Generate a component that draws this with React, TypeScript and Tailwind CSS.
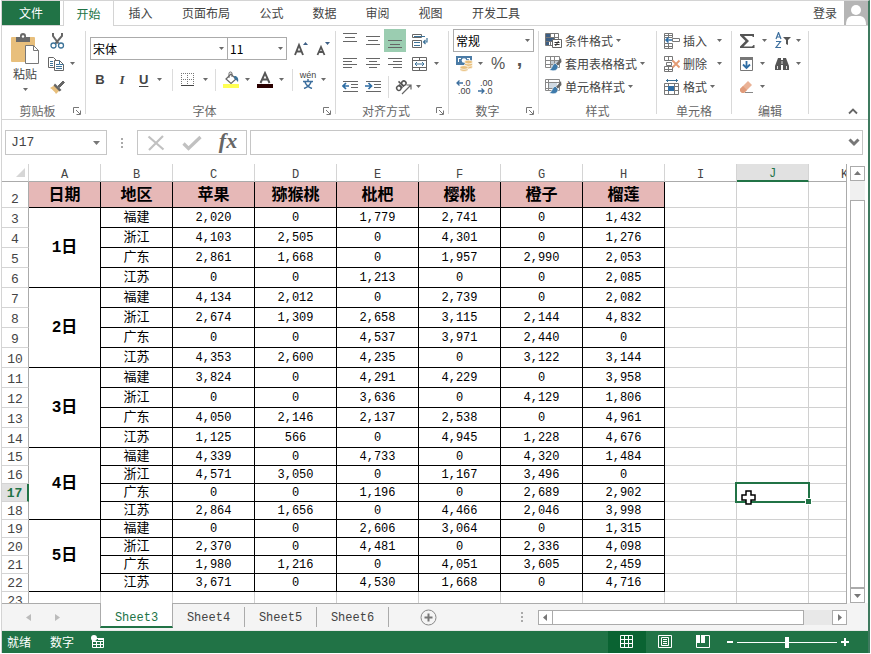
import { useState } from "react";
import type { ReactNode } from "react";

const regions = ["福建", "浙江", "广东", "江苏"];
const headers = ["日期", "地区", "苹果", "猕猴桃", "枇杷", "樱桃", "橙子", "榴莲"];
const columns = ["A", "B", "C", "D", "E", "F", "G", "H", "I", "J", "K"];
const ribbonTabs = [
  { name: "插入", width: "w-[53px]" },
  { name: "页面布局", width: "w-[78px]" },
  { name: "公式", width: "w-[53px]" },
  { name: "数据", width: "w-[53px]" },
  { name: "审阅", width: "w-[53px]" },
  { name: "视图", width: "w-[53px]" },
  { name: "开发工具", width: "w-[78px]" },
];
const sheets = ["Sheet3", "Sheet4", "Sheet5", "Sheet6"];

const days = [
  {
    day: "1日",
    rows: [
      ["2,020", "0", "1,779", "2,741", "0", "1,432"],
      ["4,103", "2,505", "0", "4,301", "0", "1,276"],
      ["2,861", "1,668", "0", "1,957", "2,990", "2,053"],
      ["0", "0", "1,213", "0", "0", "2,085"],
    ],
  },
  {
    day: "2日",
    rows: [
      ["4,134", "2,012", "0", "2,739", "0", "2,082"],
      ["2,674", "1,309", "2,658", "3,115", "2,144", "4,832"],
      ["0", "0", "4,537", "3,971", "2,440", "0"],
      ["4,353", "2,600", "4,235", "0", "3,122", "3,144"],
    ],
  },
  {
    day: "3日",
    rows: [
      ["3,824", "0", "4,291", "4,229", "0", "3,958"],
      ["0", "0", "3,636", "0", "4,129", "1,806"],
      ["4,050", "2,146", "2,137", "2,538", "0", "4,961"],
      ["1,125", "566", "0", "4,945", "1,228", "4,676"],
    ],
  },
  {
    day: "4日",
    rows: [
      ["4,339", "0", "4,733", "0", "4,320", "1,484"],
      ["4,571", "3,050", "0", "1,167", "3,496", "0"],
      ["0", "0", "1,196", "0", "2,689", "2,902"],
      ["2,864", "1,656", "0", "4,466", "2,046", "3,998"],
    ],
  },
  {
    day: "5日",
    rows: [
      ["0", "0", "2,606", "3,064", "0", "1,315"],
      ["2,370", "0", "4,481", "0", "2,336", "4,098"],
      ["1,980", "1,216", "0", "4,051", "3,605", "2,459"],
      ["3,671", "0", "4,530", "1,668", "0", "4,716"],
    ],
  },
];

function Icon({ w = 16, h = 16, children }: { w?: number; h?: number; children: ReactNode }) {
  return (
    <svg width={w} height={h} viewBox={`0 0 ${w} ${h}`} fill="none" className="shrink-0" aria-hidden="true">
      {children}
    </svg>
  );
}

function Caret() {
  return (
    <Icon w={5} h={3}>
      <path d="M0 0h5L2.5 3z" fill="#6a6a6a" />
    </Icon>
  );
}

function Tool({ label, className = "", children }: { label: string; className?: string; children: ReactNode }) {
  return (
    <button type="button" aria-label={label} className={`flex h-[23px] shrink-0 items-center ${className}`}>
      {children}
    </button>
  );
}

function Divider() {
  return <div className="h-[22px] w-px shrink-0 bg-[#dcdcdc]" />;
}

function Group({ title, launcher, className, children }: { title: string; launcher?: boolean; className: string; children: ReactNode }) {
  return (
    <section aria-label={title} className={`flex shrink-0 flex-col ${className}`}>
      <div className="flex flex-1">
        <div className="flex min-w-0 flex-1 flex-col">
          <div className="h-[73px]">{children}</div>
          <div className="flex h-5 items-center">
            <span className="flex-1 pt-[3px] text-center leading-4 text-[#666]">{title}</span>
            {launcher && (
              <button type="button" aria-label={`${title}设置`} className="flex w-3 pt-1">
                <Icon w={8} h={8}>
                  <path d="M.5 6V.5H6M3 3l4 4M7.5 3.5v4h-4" stroke="#777" />
                </Icon>
              </button>
            )}
          </div>
        </div>
        <div className="my-[5px] w-px bg-[#d9d9d9]" />
      </div>
    </section>
  );
}

function Dropdown({ label, value, className }: { label: string; value: string; className: string }) {
  return (
    <div className={`relative ${className}`}>
      <select aria-label={label} className="h-[23px] w-full appearance-none border border-[#ababab] bg-white pl-[2px] text-black outline-none">
        <option>{value}</option>
      </select>
      <span className="pointer-events-none absolute top-[10px] right-[4px]">
        <Caret />
      </span>
    </div>
  );
}

function Lines({ d }: { d: string }) {
  return (
    <Icon w={16} h={15}>
      <path d={d} stroke="#666" />
    </Icon>
  );
}

function ClipboardGroup() {
  return (
    <Group title="剪贴板" launcher className="w-[84px]">
      <div className="flex pt-[3px]">
        <button type="button" className="ml-[7px] flex w-[32px] flex-col items-center pt-[4px] text-[#444]">
          <Icon w={30} h={31}>
            <rect x="1" y="4" width="24" height="25" rx="1" fill="#e8bf7c" />
            <path d="M6 4h4V3a3 3 0 0 1 6 0v1h4v5H6z" fill="#6a6a6a" />
            <circle cx="13" cy="3.5" r="1.2" fill="#fff" />
            <path d="M15.5 12.5h8l5 5v13h-13z" fill="#fff" stroke="#777" />
            <path d="M23.5 12.5v5h5" stroke="#777" />
          </Icon>
          <span className="mt-[2px] leading-4">粘贴</span>
          <span className="mt-[6px]">
            <Caret />
          </span>
        </button>
        <div className="ml-[7px] flex flex-col items-start">
          <Tool label="剪切" className="w-[18px] justify-center">
            <Icon>
              <path d="M4 0v3l5.500 7.500M13 0v3l-6.500 7.500" stroke="#666" strokeWidth="2" />
              <circle cx="4.500" cy="12.500" r="2.500" stroke="#3d7399" strokeWidth="1.300" />
              <circle cx="12" cy="12.500" r="2.500" stroke="#3d7399" strokeWidth="1.300" />
            </Icon>
          </Tool>
          <Tool label="复制" className="w-[28px] gap-[6px]">
            <Icon>
              <path d="M.5 1.5h5l3 3v7h-8z" fill="#fff" stroke="#666" />
              <path d="M2 5.500h3M2 7.500h3M2 9.500h3" stroke="#3d7399" />
              <path d="M6.500 4.500h5l4 4v6h-9z" fill="#fff" stroke="#666" />
              <path d="M8 8.500h3M8 10.500h6M8 12.500h6M11.500 4.500v4h4" stroke="#3d7399" />
            </Icon>
            <Caret />
          </Tool>
          <Tool label="格式刷" className="w-[18px] justify-center">
            <Icon>
              <path d="M1 9l5-3 5 5-4 4c-1-2-4-5-6-6z" fill="#e8bf7c" />
              <path d="M6 4.500l6.500 6.500-2 1.500L4.500 6.500z" fill="#666" />
              <path d="M9 7l5-5 1.500 1.500-5 5z" fill="#666" stroke="#666" />
            </Icon>
          </Tool>
        </div>
      </div>
    </Group>
  );
}

function FontGroup() {
  return (
    <Group title="字体" launcher className="w-[250px]">
      <div className="flex items-center pt-[11px] pl-1">
        <Dropdown label="字体名称" value="宋体" className="w-[138px]" />
        <Dropdown label="字号" value="11" className="-ml-px w-[60px]" />
        <Tool label="增大字号" className="ml-[5px] w-[18px] justify-center">
          <Icon w={15}>
            <path d="M1 14L5 4 9 14M2.500 10.500h5" stroke="#555" strokeWidth="1.900" />
            <path d="M9 4h5L11.500 1z" fill="#3d5f85" />
          </Icon>
        </Tool>
        <Tool label="减小字号" className="ml-[4px] w-[18px] justify-center">
          <Icon w={15}>
            <path d="M1.500 14L5 6 8.500 14M3 11h4" stroke="#555" strokeWidth="1.800" />
            <path d="M9 1h5L11.500 4z" fill="#3d5f85" />
          </Icon>
        </Tool>
      </div>
      <div className="flex items-center pt-[8px] pl-[3px] font-['Liberation_Sans',sans-serif] text-[13px] text-[#444]">
        <Tool label="加粗" className="w-[22px] justify-center">
          <b>B</b>
        </Tool>
        <Tool label="倾斜" className="w-[22px] justify-center">
          <i className="font-['Liberation_Serif',serif] font-bold">I</i>
        </Tool>
        <Tool label="下划线" className="w-[36px] gap-[9px] pl-[6px]">
          <b className="underline underline-offset-2">U</b>
          <Caret />
        </Tool>
        <div className="ml-[3px] flex items-center">
          <Divider />
          <Tool label="边框" className="w-[42px] gap-[8px] pl-[8px]">
            <Icon w={14} h={14}>
              <path d="M.5 0v13M6.500 0v13M12.500 0v13M0 .5h13M0 6.500h13" stroke="#777" strokeDasharray="1 1" />
              <path d="M0 12.500h13" stroke="#444" />
            </Icon>
            <Caret />
          </Tool>
          <Divider />
        </div>
        <Tool label="填充颜色" className="w-[39px] gap-[5px] pl-[7px]">
          <Icon w={17} h={17}>
            <path d="M3 8l5-5 5 5-5 4.500z" fill="#fff" stroke="#666" strokeWidth="1.200" />
            <path d="M6 7V2.500a1.500 1.500 0 0 1 3 0V6" stroke="#666" />
            <path d="M11 5c3-.5 5 2 4 6-1-1-2-2.500-3.500-3z" fill="#3d7399" />
            <path d="M0 13h16v4H0z" fill="#ffff52" />
          </Icon>
          <Caret />
        </Tool>
        <Tool label="字体颜色" className="w-[33px] gap-[6px] pl-[2px]">
          <Icon w={16} h={17}>
            <path d="M3.500 12L8 2l4.500 10M5 8.500h6" stroke="#555" strokeWidth="1.900" />
            <path d="M0 13h16v4H0z" fill="#2a0000" />
          </Icon>
          <Caret />
        </Tool>
        <div className="ml-[4px] flex items-center">
          <Divider />
          <Tool label="拼音指南" className="w-[40px] justify-center gap-[5px]">
            <span className="flex flex-col items-center text-[9px] leading-[10px]">
              <span className="h-[9px]">wén</span>
              <Icon w={10} h={10}>
                <path d="M5 0v2M0 2.500h10M2 3c1 3 3 5 7 6.500M8 3C7 6 5 8 1 9.500" stroke="#3d6f9e" strokeWidth="1.500" />
              </Icon>
            </span>
            <Caret />
          </Tool>
        </div>
      </div>
    </Group>
  );
}

function AlignmentGroup() {
  return (
    <Group title="对齐方式" launcher className="w-[113px]">
      <div className="flex flex-col pt-[3px] pl-[3px]">
        <div className="flex">
          <Tool label="顶端对齐" className="w-[22px] justify-center">
            <Lines d="M1 .5h14M3 4.500h10M1 8.500h14" />
          </Tool>
          <Tool label="垂直居中" className="w-[23px] justify-center">
            <Lines d="M1 3.500h14M3 7.500h10M1 11.500h14" />
          </Tool>
          <Tool label="底端对齐" className="w-[22px] justify-center bg-[#9bcdb1]">
            <Lines d="M1 7.500h14M3 11.500h10M1 14.500h14" />
          </Tool>
          <Tool label="自动换行" className="ml-[4px] w-[20px] justify-center">
            <Icon>
              <path d="M.5 1.500h9v3h-9zM.5 7.500h9v7h-9z" stroke="#666" />
              <path d="M2 3.500h11M2 9.500h6M2 12.500h6" stroke="#3d7399" />
              <path d="M15 5v4h-3M13.500 7l-2 2 2 2" stroke="#3d7399" strokeWidth="1.200" />
            </Icon>
          </Tool>
        </div>
        <div className="flex">
          <Tool label="左对齐" className="w-[22px] justify-center">
            <Lines d="M1 2.500h14M1 5.500h9M1 8.500h14M1 11.500h9" />
          </Tool>
          <Tool label="居中" className="w-[23px] justify-center">
            <Lines d="M1 2.500h14M4 5.500h8M1 8.500h14M4 11.500h8" />
          </Tool>
          <Tool label="右对齐" className="w-[22px] justify-center">
            <Lines d="M1 2.500h14M6 5.500h9M1 8.500h14M6 11.500h9" />
          </Tool>
          <Tool label="合并后居中" className="ml-[6px] w-[30px] gap-[6px]">
            <Icon>
              <path d="M.5 1.500h14v13H.5zM.5 4.500h14M.5 11.500h14M7.500 1.500v3M7.500 11.500v3" stroke="#666" />
              <path d="M3 8h9M5 6L3 8l2 2M10 6l2 2-2 2" stroke="#3d7399" />
            </Icon>
            <Caret />
          </Tool>
        </div>
        <div className="flex items-center">
          <Tool label="减少缩进量" className="w-[22px] justify-center">
            <Icon>
              <path d="M1 2.500h15M9 5.500h7M9 8.500h7M1 12.500h15" stroke="#666" />
              <path d="M1 7h6M4 4L1 7l3 3" stroke="#2f6ea5" strokeWidth="1.700" />
            </Icon>
          </Tool>
          <Tool label="增加缩进量" className="w-[23px] justify-center">
            <Icon>
              <path d="M1 2.500h15M9 5.500h7M9 8.500h7M1 12.500h15" stroke="#666" />
              <path d="M0 7h6M3.500 4l3 3-3 3" stroke="#2f6ea5" strokeWidth="1.700" />
            </Icon>
          </Tool>
          <div className="ml-[4px] flex items-center">
            <Divider />
            <Tool label="方向" className="w-[38px] gap-[3px] pl-[6px]">
              <Icon w={18} h={18}>
                <g stroke="#555" strokeWidth="1.500" transform="rotate(-45 6 8)">
                  <circle cx="3" cy="8" r="2.200" />
                  <path d="M5.500 5.500v5" />
                  <circle cx="10" cy="8" r="2.200" />
                  <path d="M7.500 3v7.500" />
                </g>
                <path d="M7 16l8.500-8.500M11.500 7h4.500v4.500" stroke="#666" strokeWidth="1.200" />
              </Icon>
              <Caret />
            </Tool>
          </div>
        </div>
      </div>
    </Group>
  );
}

function DecimalDigits({ digits, className = "" }: { digits: string; className?: string }) {
  return <span className={`block h-2 font-['Liberation_Sans',sans-serif] text-[9px] leading-2 ${className}`}>{digits}</span>;
}

function NumberGroup() {
  return (
    <Group title="数字" launcher className="w-[90px]">
      <div className="flex flex-col pt-[3px] pl-[4px]">
        <Dropdown label="数字格式" value="常规" className="w-[81px]" />
        <div className="flex font-['Liberation_Sans',sans-serif] text-base text-[#555]">
          <Tool label="会计数字格式" className="w-[34px] gap-[5px] pl-[3px]">
            <Icon w={17} h={17}>
              <path d="M0 1h16v9H0z" fill="#4a7ba6" />
              <path d="M2 3h3v1H3v3H2zM11 3h3v4h-1V4h-2z" fill="#fff" />
              <circle cx="8" cy="5.500" r="2.300" fill="#fff" />
              <g fill="#e8bf7c" stroke="#fff" strokeWidth=".7">
                <ellipse cx="12.500" cy="12" rx="4" ry="1.900" />
                <ellipse cx="12.500" cy="9.500" rx="4" ry="1.900" />
                <ellipse cx="12.500" cy="7" rx="4" ry="1.900" />
                <ellipse cx="8" cy="14.500" rx="4" ry="1.900" />
                <ellipse cx="8" cy="12.500" rx="4" ry="1.900" />
              </g>
            </Icon>
            <Caret />
          </Tool>
          <Tool label="百分比样式" className="w-[22px] justify-center">
            %
          </Tool>
          <Tool label="千位分隔样式" className="w-[21px] justify-center pb-[9px] text-xl font-bold">
            ,
          </Tool>
        </div>
        <div className="flex text-[#444]">
          <Tool label="增加小数位数" className="ml-[3px] w-[22px]">
            <span className="flex flex-col items-end">
              <span className="flex">
                <Icon w={7} h={8}>
                  <path d="M1 4h6M3.500 1.500L1 4l2.500 2.500" stroke="#3d6f9e" strokeWidth="1.300" />
                </Icon>
                <DecimalDigits digits=".0" />
              </span>
              <DecimalDigits digits=".00" />
            </span>
          </Tool>
          <Tool label="减少小数位数" className="w-[20px]">
            <span className="flex flex-col items-end">
              <DecimalDigits digits=".00" />
              <span className="flex">
                <Icon w={7} h={8}>
                  <path d="M0 4h6M3.500 1.500L6 4 3.500 6.500" stroke="#3d6f9e" strokeWidth="1.300" />
                </Icon>
                <DecimalDigits digits=".0" />
              </span>
            </span>
          </Tool>
        </div>
      </div>
    </Group>
  );
}

function StyleBrush() {
  return (
    <>
      <path d="M16 3L11 9l1.500 2L16.500 7z" fill="#666" />
      <path d="M10.500 8.500c-3 0-3 4.500-6 6.500 4 1.500 8.500 1 8.500-4z" fill="#3d7aab" stroke="#fff" strokeWidth=".6" />
    </>
  );
}

function StylesGroup() {
  return (
    <Group title="样式" className="w-[118px]">
      <div className="flex flex-col items-start pt-[3px] pl-[6px] text-[#444]">
        <button type="button" className="flex h-[23px] items-center gap-[3px]">
          <Icon w={17} h={17}>
            <path d="M.5 1.500h13v12H.5zM.5 5.500h13M.5 9.500h13M5.500 1.500v12M9.500 1.500v12" stroke="#777" />
            <path d="M1 2h4v3H1zM1 6h8v3H1zM1 10h3v3H1z" fill="#3d5f85" />
            <path d="M7.500 7.500h9v8h-9z" fill="#fff" stroke="#666" />
            <path d="M9.500 10.500h5M9.500 12.500h5M13.500 9l-3 5" stroke="#333" />
          </Icon>
          条件格式
          <Caret />
        </button>
        <button type="button" className="flex h-[23px] items-center gap-[3px]">
          <Icon w={17} h={17}>
            <path d="M.5 1.500h14v11H.5zM.5 5.500h14M.5 9.500h14M5.500 1.500v11M9.500 1.500v11" fill="#fff" stroke="#888" />
            <path d="M6 6h3v3H6zM10 6h3v3h-3zM6 10h3v2H6z" fill="#c3ccd4" />
            <StyleBrush />
          </Icon>
          套用表格格式
          <Caret />
        </button>
        <button type="button" className="flex h-[23px] items-center gap-[3px]">
          <Icon w={17} h={17}>
            <path d="M.5 1.500h14v11H.5zM.5 4.500h14M3.500 1.500v11M.5 10.500h10" fill="#fff" stroke="#888" />
            <path d="M4 5h8v5H4z" fill="#d0dae3" />
            <StyleBrush />
          </Icon>
          单元格样式
          <Caret />
        </button>
      </div>
    </Group>
  );
}

function CellsGroup() {
  return (
    <Group title="单元格" className="w-[75px]">
      <div className="flex flex-col items-start pt-[3px] pl-[7px] text-[#444]">
        <button type="button" className="flex h-[23px] items-center">
          <Icon w={17}>
            <path d="M.5.5h8v4h-8zM.5 10.500h8v5h-8zM4.500.5v4M4.500 10.500v5M.5 2.500h8M.5 13.500h8M.5 4.500v6" stroke="#777" />
            <path d="M8.500 5.500h7v3h-7z" stroke="#777" />
            <path d="M2 7h6M4.500 4.500L2 7l2.500 2.500" stroke="#2f6ea5" strokeWidth="1.600" />
          </Icon>
          <span className="mr-[10px] ml-[2px]">插入</span>
          <Caret />
        </button>
        <button type="button" className="flex h-[23px] items-center">
          <Icon w={17}>
            <path d="M.5.5h8v4h-8zM.5 10.500h8v5h-8zM4.500.5v4M4.500 10.500v5M.5 13.500h8M2.500 6.500h5v3h-5z" stroke="#777" />
            <path d="M8.500 4.500l7 7M15.500 4.500l-7 7" stroke="#e39a72" strokeWidth="1.800" />
          </Icon>
          <span className="mr-[10px] ml-[2px]">删除</span>
          <Caret />
        </button>
        <button type="button" className="flex h-[23px] items-center">
          <Icon w={17}>
            <path d="M.5 4.500h14v11H.5zM.5 7.500h14M.5 11.500h14M4.500 4.500v11M10.500 4.500v11" stroke="#777" />
            <path d="M4 7h6v5H4z" fill="#2f6ea5" />
            <path d="M2 1.500h12M3.500 0v3M12.500 0v3" stroke="#3d7399" />
          </Icon>
          <span className="mr-[3px] ml-[2px]">格式</span>
          <Caret />
        </button>
      </div>
    </Group>
  );
}

function EditingGroup() {
  return (
    <Group title="编辑" className="w-[77px]">
      <div className="flex flex-col pt-[3px] pl-[7px]">
        <div className="flex">
          <Tool label="自动求和" className="w-[29px] gap-[6px]">
            <Icon w={17}>
              <path d="M1 1h14v3h-1l-1-1H5l5 5-5.500 5.500H13l1.500-1.500h1V15H1v-1.500L6.500 8 1 2.500z" fill="#555" />
            </Icon>
            <Caret />
          </Tool>
          <Tool label="排序和筛选" className="ml-[7px] w-[26px] gap-[4px]">
            <Icon w={17} h={17}>
              <path d="M1 7L3.500.5 6 7M2 5h3M1 9.500h4.500L1 15.500h5" stroke="#3d6f9e" strokeWidth="1.200" />
              <path d="M8 5h8l-3 3v5l-2-1V8z" fill="#555" />
            </Icon>
            <Caret />
          </Tool>
        </div>
        <div className="flex">
          <Tool label="填充" className="w-[27px] gap-[6px]">
            <Icon w={15}>
              <path d="M1.500 1.500h12v13h-12z" stroke="#777" />
              <path d="M1 1h13v3H1z" fill="#777" />
              <path d="M7.500 5v7M4 8.500l3.500 3.500L11 8.500" stroke="#2f6ea5" strokeWidth="1.800" />
            </Icon>
            <Caret />
          </Tool>
          <Tool label="查找和选择" className="ml-[8px] w-[28px] gap-[5px]">
            <Icon w={17}>
              <path d="M4 2h3v2h2V2h3l3 8v4H9V9H7v5H1v-4z" fill="#555" />
              <path d="M3.500 10v3M12.500 10v3M8 5v3" stroke="#ddd" />
            </Icon>
            <Caret />
          </Tool>
        </div>
        <div className="flex">
          <Tool label="清除" className="w-[27px] gap-[6px]">
            <Icon w={15}>
              <path d="M1 10l8-8 4 4-8 8H3l-2-2z" fill="#eab296" />
              <path d="M1 10l3-3 4 4-3 3H3l-2-2z" fill="#e09b7a" />
              <path d="M6 13.500h8" stroke="#888" />
            </Icon>
            <Caret />
          </Tool>
        </div>
      </div>
    </Group>
  );
}

function FormulaBar() {
  return (
    <div className="flex h-[44px] items-start pt-[10px] pr-[5px] pl-[3px]">
      <div className="flex h-[25px] w-[102px] items-center border border-[#c6c6c6] pr-[6px] pl-[5px]">
        <input
          aria-label="名称框"
          defaultValue="J17"
          className="min-w-0 flex-1 font-['Liberation_Mono',monospace] text-[13px] text-[#444] outline-none"
        />
        <button type="button" aria-label="展开名称框">
          <Icon w={7} h={4}>
            <path d="M0 0h7L3.500 4z" fill="#777" />
          </Icon>
        </button>
      </div>
      <div className="flex h-[25px] w-[30px] items-center justify-center">
        <Icon w={2} h={12}>
          <path d="M1 1v2M1 5v2M1 9v2" stroke="#aaa" strokeWidth="2" />
        </Icon>
      </div>
      <div className="flex h-[25px] w-[110px] items-center border border-[#c6c6c6]">
        <Tool label="取消" className="w-[36px] justify-center">
          <Icon w={18}>
            <path d="M1.500 1.500l15 13M16 1L2 15" stroke="#c1c1c1" strokeWidth="2.200" />
          </Icon>
        </Tool>
        <Tool label="输入" className="w-[36px] justify-center">
          <Icon w={20}>
            <path d="M1.500 8.500l5 5L18.500 2" stroke="#c1c1c1" strokeWidth="3.200" />
          </Icon>
        </Tool>
        <Tool label="插入函数" className="w-[36px] justify-center font-['Liberation_Serif',serif] text-[22px] leading-[22px] text-[#666]">
          <i className="pb-[3px] font-bold">fx</i>
        </Tool>
      </div>
      <div className="ml-[3px] flex h-[25px] min-w-0 flex-1 items-center border border-[#c6c6c6] pr-[2px]">
        <input aria-label="编辑栏" className="min-w-0 flex-1 px-1 outline-none" />
        <button type="button" aria-label="展开编辑栏">
          <Icon w={12} h={9}>
            <path d="M1.500 1.500L6 6l4.500-4.500" stroke="#777" strokeWidth="3" />
          </Icon>
        </button>
      </div>
    </div>
  );
}

function RowHeader({ row }: { row: number }) {
  const style =
    row === 17
      ? "border-r-2 border-r-[#217346] bg-[#e1e1e1] font-bold text-[#217346]"
      : "border-r border-r-[#ababab] font-normal text-[#444]";
  return (
    <th scope="row" className={`border-b border-b-[#d4d4d4] p-0 align-bottom text-[13px] leading-[14px] ${style}`}>
      {row}
    </th>
  );
}

function EmptyCells({ row }: { row: number }) {
  return (
    <>
      {["I", "J", "K"].map((column) => (
        <td key={column} className={`border-r border-b border-[#d0d0d0] p-0 ${row === 17 && column === "J" ? "relative z-10" : ""}`}>
          {row === 17 && column === "J" && (
            <>
              <div className="absolute -inset-[2px] border-2 border-[#217346]" />
              <div className="absolute -right-[4px] -bottom-[4px] size-[7px] border border-white bg-[#217346]" />
              <div className="absolute top-[6px] left-[4px]">
                <Icon w={15} h={15}>
                  <path d="M5 1h5v4h4v5h-4v4H5v-4H1V5h4z" fill="#fff" stroke="#000" strokeWidth="1.500" />
                </Icon>
              </div>
            </>
          )}
        </td>
      ))}
    </>
  );
}

function SheetGrid() {
  return (
    <div className="h-[439px] min-w-0 flex-1 overflow-hidden border-r border-[#ababab]">
      <table className="w-full min-w-[879px] table-fixed border-separate border-spacing-0 text-center font-['Liberation_Mono','Noto_Sans_CJK_SC',monospace] text-xs leading-4 text-black">
        <colgroup>
          <col className="w-[27px]" />
          <col className="w-[72px]" />
          <col className="w-[72px]" />
          {headers.slice(2).map((name) => (
            <col key={name} className="w-[82px]" />
          ))}
          <col className="w-[72px]" />
          <col className="w-[72px]" />
          <col />
        </colgroup>
        <thead>
          <tr className="h-[18px]">
            <td className="border-r border-b border-r-[#d4d4d4] border-b-[#ababab] p-0">
              <button type="button" aria-label="全选" className="mr-[3px] ml-auto block">
                <Icon w={9} h={9}>
                  <path d="M9 0v9H0z" fill="#d6d6d6" />
                </Icon>
              </button>
            </td>
            {columns.map((column) => (
              <th
                key={column}
                scope="col"
                className={`border-r border-r-[#d4d4d4] p-0 align-bottom leading-3 font-normal ${
                  column === "J" ? "border-b-2 border-b-[#217346] bg-[#e1e1e1] text-[#217346]" : "border-b border-b-[#ababab] text-[#444]"
                }`}
              >
                {column}
              </th>
            ))}
          </tr>
        </thead>
        <tbody>
          <tr className="h-[26px]">
            <RowHeader row={2} />
            {headers.map((name) => (
              <th key={name} scope="col" className="border-r border-b border-black bg-[#e6b8b7] p-0 pt-[3px] text-base leading-5 font-bold">
                {name}
              </th>
            ))}
            <EmptyCells row={2} />
          </tr>
          {days.map(({ day, rows }, dayIndex) =>
            rows.map((values, index) => {
              const row = 3 + dayIndex * 4 + index;
              return (
                <tr key={row} className={row < 15 ? "h-[20px]" : "h-[18px]"}>
                  <RowHeader row={row} />
                  {index === 0 && (
                    <th scope="rowgroup" rowSpan={4} className="border-r border-b border-black p-0 text-base font-bold">
                      {day}
                    </th>
                  )}
                  <td className="border-r border-b border-black p-0 pt-px text-[13px]">{regions[index]}</td>
                  {values.map((value, column) => (
                    <td key={column} className="border-r border-b border-black p-0 pt-px">
                      {value}
                    </td>
                  ))}
                  <EmptyCells row={row} />
                </tr>
              );
            }),
          )}
          <tr className="h-[18px]">
            <RowHeader row={23} />
            {headers.map((name) => (
              <td key={name} className="border-r border-b border-[#d0d0d0] p-0" />
            ))}
            <EmptyCells row={23} />
          </tr>
        </tbody>
      </table>
    </div>
  );
}

function ScrollArrow({ label, d }: { label: string; d: string }) {
  return (
    <button type="button" aria-label={label} className="flex size-[15px] shrink-0 items-center justify-center border border-[#ababab] bg-white">
      <Icon w={7} h={7}>
        <path d={d} fill="#777" />
      </Icon>
    </button>
  );
}

function SheetBar() {
  const [active, setActive] = useState("Sheet3");
  return (
    <div className="flex h-[28px] border-b border-[#e8e8e8] bg-[#f4f4f4]">
      <div className="flex w-[98px] shrink-0 items-center gap-[24px] border-t border-[#ababab] pl-[24px]">
        <button type="button" aria-label="上一个工作表">
          <Icon w={5} h={7}>
            <path d="M5 0v7L0 3.500z" fill="#bbb" />
          </Icon>
        </button>
        <button type="button" aria-label="下一个工作表">
          <Icon w={5} h={7}>
            <path d="M0 0v7l5-3.500z" fill="#bbb" />
          </Icon>
        </button>
      </div>
      {sheets.map((sheet) => (
        <button
          key={sheet}
          type="button"
          onClick={() => setActive(sheet)}
          className={`shrink-0 font-['Liberation_Mono',monospace] ${
            active === sheet
              ? "h-[25px] w-[73px] border-x border-b-2 border-x-[#ababab] border-b-[#217346] bg-white pt-[6px] text-[#217346]"
              : "flex w-[72px] items-center border-t border-[#ababab] text-[#444]"
          }`}
        >
          {active === sheet ? (
            sheet
          ) : (
            <span className="flex h-[20px] flex-1 items-center justify-center border-r border-[#ababab] pt-[2px]">{sheet}</span>
          )}
        </button>
      ))}
      <div className="flex min-w-0 flex-1 items-center border-t border-[#ababab]">
        <button type="button" aria-label="新工作表" className="ml-[31px]">
          <Icon w={17} h={17}>
            <circle cx="8.500" cy="8.500" r="7.500" stroke="#888" />
            <path d="M8.500 4.500v8M4.500 8.500h8" stroke="#777" strokeWidth="2" />
          </Icon>
        </button>
        <div className="ml-auto pr-[15px]">
          <Icon w={2} h={12}>
            <path d="M1 1v2M1 5v2M1 9v2" stroke="#aaa" strokeWidth="2" />
          </Icon>
        </div>
        <div className="flex w-[309px] bg-[#e8e8e8]">
          <ScrollArrow label="向左滚动" d="M5 0v7L1 3.500z" />
          <div className="-ml-px w-[252px] border border-[#ababab] bg-white" />
          <div className="flex-1" />
          <ScrollArrow label="向右滚动" d="M2 0v7l4-3.500z" />
        </div>
      </div>
      <div className="w-[21px] shrink-0" />
    </div>
  );
}

function StatusBar() {
  return (
    <footer className="flex h-[22px] items-center bg-[#217346] pl-[5px] text-white">
      <span>就绪</span>
      <span className="ml-[19px]">数字</span>
      <button type="button" aria-label="宏录制" className="ml-[17px]">
        <Icon w={14} h={14}>
          <path d="M1.500 3.500h11v9h-11zM1.500 6.500h11M1.500 9.500h11M5.500 6v7M9.500 6v7M7 3.500h6M7 4.500h6" stroke="#fff" />
          <circle cx="3" cy="3" r="3" fill="#fff" />
        </Icon>
      </button>
      <div className="ml-auto flex h-full items-center">
        <button type="button" aria-label="普通视图" className="flex h-full w-[38px] items-center justify-center bg-[#0a6332]">
          <Icon w={14} h={14}>
            <path d="M.5.5h12v12H.5zM4.500.5v12M8.500.5v12M.5 4.500h12M.5 8.500h12" stroke="#fff" />
          </Icon>
        </button>
        <button type="button" aria-label="页面布局视图" className="flex h-full w-[38px] items-center justify-center">
          <Icon w={14} h={14}>
            <path d="M.5.5h13v12H.5zM3.500 2.500h7v8h-7zM5 4.500h4M5 6.500h4M5 8.500h4" stroke="#fff" />
          </Icon>
        </button>
        <button type="button" aria-label="分页预览" className="flex h-full w-[38px] items-center justify-center">
          <Icon w={14} h={14}>
            <path d="M0 0h4v8H0zM5 0h4v8H5z" fill="#fff" />
            <path d="M9 .5h4.500v12H.5V8" stroke="#fff" />
          </Icon>
        </button>
        <button type="button" aria-label="缩小" className="ml-[5px]">
          <Icon w={6} h={8}>
            <path d="M0 4h6" stroke="#fff" strokeWidth="2" />
          </Icon>
        </button>
        <input
          type="range"
          aria-label="显示比例"
          defaultValue={50}
          className="mx-1 h-[22px] w-[100px] appearance-none bg-transparent [&::-webkit-slider-runnable-track]:h-px [&::-webkit-slider-runnable-track]:bg-white [&::-webkit-slider-thumb]:-mt-[5px] [&::-webkit-slider-thumb]:h-[11px] [&::-webkit-slider-thumb]:w-1 [&::-webkit-slider-thumb]:appearance-none [&::-webkit-slider-thumb]:bg-white"
        />
        <button type="button" aria-label="放大" className="mr-[19px]">
          <Icon w={8} h={8}>
            <path d="M0 4h8M4 0v8" stroke="#fff" strokeWidth="2" />
          </Icon>
        </button>
      </div>
    </footer>
  );
}

export default function App() {
  return (
    <div className="bg-white pr-[1px] pl-px font-['Noto_Sans_CJK_SC','Liberation_Sans',sans-serif] text-xs">
      <div className="border-t border-r-2 border-l border-t-[#d4d4d4] border-r-[#3f7a5f] border-l-[#d4d4d4]">
        {/* Ribbon tabs */}
        <nav className="flex h-[25px] border-b border-[#d4d4d4] text-[#444]">
          <button type="button" className="w-[58px] shrink-0 bg-[#217346] text-white">
            文件
          </button>
          <button type="button" className="-mb-px ml-[3px] w-[51px] shrink-0 border-x border-[#d4d4d4] bg-white text-[#217346]">
            开始
          </button>
          {ribbonTabs.map((tab) => (
            <button key={tab.name} type="button" className={`shrink-0 ${tab.width}`}>
              {tab.name}
            </button>
          ))}
          <a href="#login" className="ml-auto self-center">
            登录
          </a>
          <div className="ml-[7px] flex w-[24px] items-end justify-center overflow-hidden bg-[#b5b5b5]">
            <Icon w={20} h={22}>
              <circle cx="10" cy="7" r="5" fill="#fff" />
              <path d="M0 22c0-7 3-9 7-9h6c4 0 7 2 7 9z" fill="#fff" />
            </Icon>
          </div>
        </nav>

        {/* Ribbon */}
        <div className="flex h-[94px] border-b border-[#d4d4d4]">
          <ClipboardGroup />
          <FontGroup />
          <AlignmentGroup />
          <NumberGroup />
          <StylesGroup />
          <CellsGroup />
          <EditingGroup />
          <button type="button" aria-label="折叠功能区" className="mr-[10px] mb-[4px] ml-auto self-end">
            <Icon w={10} h={8}>
              <path d="M1 6.500l4-4 4 4" stroke="#666" strokeWidth="1.800" />
            </Icon>
          </button>
        </div>

        <FormulaBar />

        {/* Worksheet */}
        <main className="flex">
          <SheetGrid />
          <div className="flex w-[21px] shrink-0 flex-col bg-white pt-[2px] pl-[3px]">
            <ScrollArrow label="向上滚动" d="M0 5h7L3.500 1z" />
            <div className="h-[19px] w-[15px] bg-[#f0f0f0]" />
            <div className="w-[15px] flex-1 border border-[#ababab]" />
            <ScrollArrow label="向下滚动" d="M0 2h7L3.500 6z" />
          </div>
        </main>
        <SheetBar />
        <StatusBar />
      </div>
    </div>
  );
}
